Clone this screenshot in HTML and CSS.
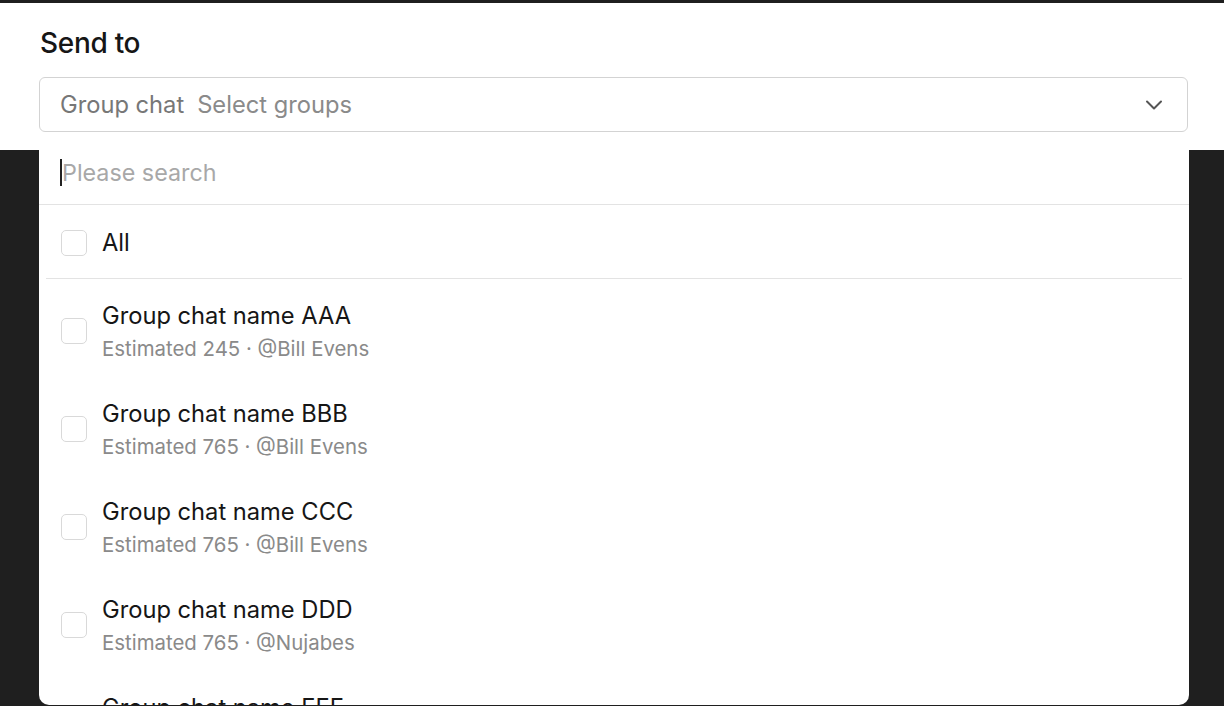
FILE: index.html
```html
<!DOCTYPE html>
<html lang="en">
<head>
    <meta charset="UTF-8">
    <meta name="viewport" content="width=device-width, initial-scale=1.0">
    <title>Send to</title>
    <link rel="stylesheet" href="styles.css">
</head>
<body>
    <div class="sheet">
        <h2 class="sheet-title">Send to</h2>
        <div class="select-box">
            <span class="select-label">Group chat</span>
            <span class="select-placeholder">Select groups</span>
            <svg class="chevron" width="18" height="12" viewBox="0 0 18 12">
                <path d="M2 2.5 L9 9.5 L16 2.5" fill="none" stroke="#555" stroke-width="2" stroke-linecap="round" stroke-linejoin="round"/>
            </svg>
        </div>
    </div>

    <div class="dropdown">
        <div class="search-row">
            <span class="caret"></span>
            <input type="text" class="search-input" placeholder="Please search">
        </div>

        <label class="option option-all">
            <span class="check"></span>
            <span class="option-name">All</span>
        </label>

        <div id="group-list" class="group-list"></div>
    </div>

    <script>
        const groups = [
            { name: "Group chat name AAA", count: 245, owner: "Bill Evens" },
            { name: "Group chat name BBB", count: 765, owner: "Bill Evens" },
            { name: "Group chat name CCC", count: 765, owner: "Bill Evens" },
            { name: "Group chat name DDD", count: 765, owner: "Nujabes" },
            { name: "Group chat name EEE", count: 765, owner: "Nujabes" }
        ];

        const list = document.getElementById('group-list');
        groups.forEach(group => {
            const row = document.createElement('label');
            row.className = 'option';
            row.innerHTML =
                '<span class="check"></span>' +
                '<span class="option-text">' +
                    '<span class="option-name">' + group.name + '</span>' +
                    '<span class="option-meta">Estimated ' + group.count + ' · @' + group.owner + '</span>' +
                '</span>';
            list.appendChild(row);
        });
    </script>
</body>
</html>
```

FILE: styles.css
```css
body {
    margin: 0;
    height: 706px;
    overflow: hidden;
    background-color: #1f1f1f;
    font-family: 'Inter', 'Roboto', sans-serif;
    color: #161616;
}

.sheet {
    margin-top: 3px;
    height: 147px;
    background-color: #fff;
    padding: 0 36px 0 39px;
    box-sizing: border-box;
}

.sheet-title {
    margin: 0;
    padding-top: 24px;
    font-size: 28px;
    font-weight: 500;
    line-height: 32px;
    letter-spacing: -0.3px;
    padding-left: 1px;
}

.select-box {
    margin-top: 18px;
    height: 55px;
    border: 1px solid #d3d3d3;
    border-radius: 6px;
    box-sizing: border-box;
    display: flex;
    align-items: center;
    padding: 0 24px 0 20px;
    font-size: 23.7px;
}

.select-label {
    color: #777;
    margin-right: 13px;
}

.select-placeholder {
    color: #8a8a8a;
    flex: 1;
}

.chevron {
    display: block;
}

/* popover under the select */
.dropdown {
    position: absolute;
    left: 39px;
    top: 140px;
    width: 1150px;
    height: 565px;
    background-color: #fff;
    border-radius: 10px;
    overflow: hidden;
}

.search-row {
    height: 64px;
    border-bottom: 1px solid #e3e3e3;
    display: flex;
    align-items: center;
    padding-left: 21px;
}

.caret {
    width: 2px;
    height: 27px;
    background-color: #222;
}

.search-input {
    border: none;
    outline: none;
    font-family: inherit;
    font-size: 23.3px;
    color: #222;
    padding: 0;
    flex: 1;
    background: transparent;
}

.search-input::placeholder {
    color: #a8a8a8;
}

.group-list {
    padding-top: 3px;
}

.option {
    display: flex;
    align-items: center;
    height: 98px;
    padding-left: 22px;
    cursor: pointer;
}

.option-all {
    height: 74px;
    margin: 0 7px;
    padding-left: 15px;
    padding-top: 2px;
    box-sizing: border-box;
    border-bottom: 1px solid #e3e3e3;
}

.check {
    width: 24px;
    height: 24px;
    border: 1.5px solid #d9d9d9;
    border-radius: 5px;
    flex-shrink: 0;
    margin-right: 15px;
}

.option-text {
    display: flex;
    flex-direction: column;
    padding-top: 4px;
}

.option-name {
    font-size: 23.7px;
    line-height: 32px;
    color: #161616;
}

.option-meta {
    font-size: 20.4px;
    line-height: 34px;
    color: #8a8a8a;
}
```
